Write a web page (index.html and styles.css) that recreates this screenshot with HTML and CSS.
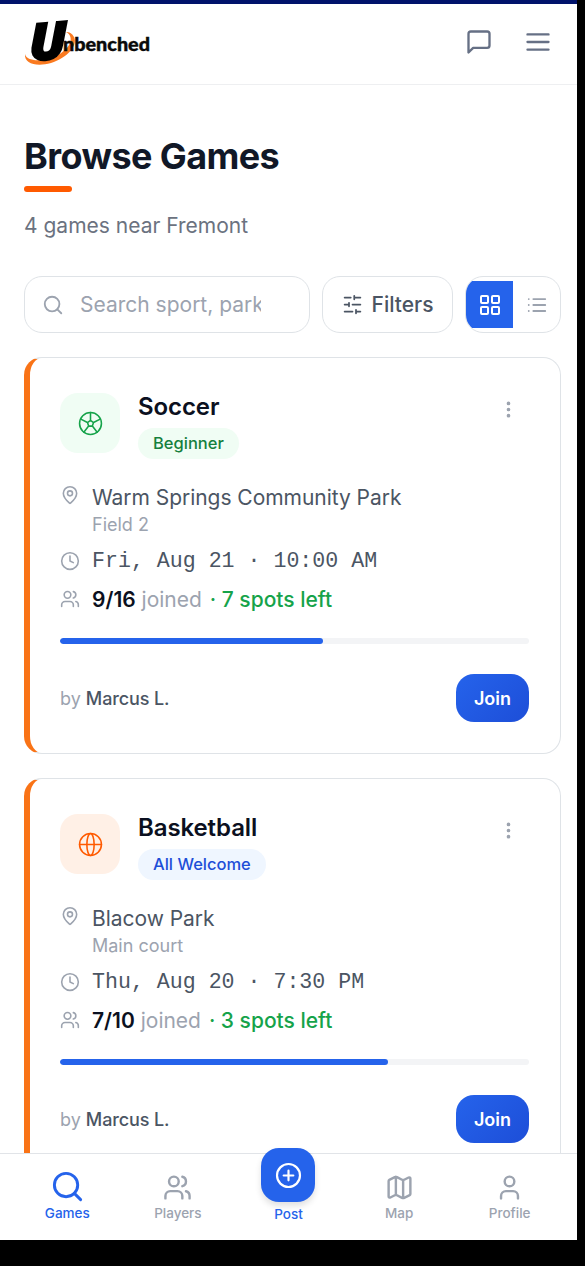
FILE: index.html
```html
<!DOCTYPE html>
<html lang="en">
<head>
<meta charset="utf-8">
<title>Unbenched – Browse Games</title>
<link rel="stylesheet" href="styles.css">
</head>
<body>
<svg class="defs" width="0" height="0" aria-hidden="true">
  <symbol id="pin" viewBox="0 0 24 24"><path d="M20 10c0 5-5.500 10.200-7.400 11.800a1 1 0 0 1-1.200 0C9.500 20.200 4 15 4 10a8 8 0 0 1 16 0"/><circle cx="12" cy="10" r="3"/></symbol>
  <symbol id="clock" viewBox="0 0 24 24"><circle cx="12" cy="12" r="10"/><path d="M12 6v6l4 2"/></symbol>
  <symbol id="users" viewBox="0 0 24 24"><path d="M16 21v-2a4 4 0 0 0-4-4H6a4 4 0 0 0-4 4v2"/><circle cx="9" cy="7" r="4"/><path d="M22 21v-2a4 4 0 0 0-3-3.870M16 3.130a4 4 0 0 1 0 7.750"/></symbol>
  <symbol id="search" viewBox="0 0 24 24"><circle cx="11" cy="11" r="8"/><path d="m21 21-4.300-4.300"/></symbol>
  <symbol id="dots" viewBox="0 0 24 24"><circle cx="12" cy="5" r="1"/><circle cx="12" cy="12" r="1"/><circle cx="12" cy="19" r="1"/></symbol>
</svg>
<div class="screen">
  <header class="header">
    <svg class="logo" viewBox="0 0 130 60" role="img" aria-label="Unbenched">
      <path class="swoosh" d="M1 40C0 50 13 53 27 49C43 44 54 32 50 23C48 19 45 18 42 18C47 20 48 26 45 31C40 39 29 45 18 46C9 47 2 45 1 40Z"/>
      <text class="logo-u" transform="translate(6.500 46.500) rotate(-5) skewX(-6)" textLength="34" lengthAdjust="spacingAndGlyphs">U</text>
      <text class="logo-rest" x="39" y="37" textLength="87" lengthAdjust="spacingAndGlyphs">nbenched</text>
    </svg>
    <div class="header-actions">
      <svg class="icon i28" viewBox="0 0 24 24"><path d="M21 15a2 2 0 0 1-2 2H7l-4 4V5a2 2 0 0 1 2-2h14a2 2 0 0 1 2 2z"/></svg>
      <svg class="icon i28" viewBox="0 0 24 24"><path d="M3 5.500h18M3 12h18M3 18.500h18"/></svg>
    </div>
  </header>
  <main class="main">
    <h1 class="title">Browse Games</h1>
    <div class="underline"></div>
    <p class="subtitle">4 games near Fremont</p>
    <div class="tools">
      <div class="search"><svg class="icon i22"><use href="#search"/></svg><span class="placeholder">Search sport, park</span></div>
      <button class="filters"><svg class="icon i21" viewBox="0 0 24 24"><path d="M21 4h-7M10 4H3M21 12h-9M8 12H3M21 20h-5M12 20H3M14 2v4M8 10v4M16 18v4"/></svg><span>Filters</span></button>
      <div class="toggle">
        <span class="toggle-on"><svg class="icon i24" viewBox="0 0 24 24"><rect x="3" y="3" width="7" height="7" rx="1"/><rect x="14" y="3" width="7" height="7" rx="1"/><rect x="14" y="14" width="7" height="7" rx="1"/><rect x="3" y="14" width="7" height="7" rx="1"/></svg></span>
        <span class="toggle-off"><svg class="icon i22" viewBox="0 0 24 24"><path d="M8 5.500h13M8 12h13M8 18.500h13M3 5.500h.01M3 12h.01M3 18.500h.01"/></svg></span>
      </div>
    </div>
    <article class="card">
      <div class="card-head">
        <div class="sport soccer"><svg class="icon" viewBox="0 0 24 24"><circle cx="12" cy="12" r="10.500"/><path d="m12 9 2.900 2.100-1.100 3.400h-3.600l-1.100-3.400zM12 1.500V9M14.900 11.100l6.400-3.300M13.800 14.500l4.600 5.800M10.200 14.500l-4.600 5.800M9.100 11.100 2.700 7.800"/></svg></div>
        <div class="heading"><h2>Soccer</h2><span class="badge green">Beginner</span></div>
        <svg class="icon dots"><use href="#dots"/></svg>
      </div>
      <div class="row place"><svg class="icon i20"><use href="#pin"/></svg><div><p class="venue">Warm Springs Community Park</p><p class="field">Field 2</p></div></div>
      <div class="row date"><svg class="icon i20"><use href="#clock"/></svg><span>Fri, Aug 21 · 10:00 AM</span></div>
      <div class="row joined"><svg class="icon i20"><use href="#users"/></svg><span><b>9/16</b> joined <em>· 7 spots left</em></span></div>
      <div class="progress"><div class="bar" style="width:56%"></div></div>
      <div class="card-foot"><span class="host">by <strong>Marcus L.</strong></span><button class="join">Join</button></div>
    </article>
    <article class="card">
      <div class="card-head">
        <div class="sport basketball"><svg class="icon" viewBox="0 0 24 24"><circle cx="12" cy="12" r="10.500"/><path d="M1.500 12h21"/><ellipse cx="12" cy="12" rx="3.500" ry="10.500"/></svg></div>
        <div class="heading"><h2>Basketball</h2><span class="badge blue">All Welcome</span></div>
        <svg class="icon dots"><use href="#dots"/></svg>
      </div>
      <div class="row place"><svg class="icon i20"><use href="#pin"/></svg><div><p class="venue">Blacow Park</p><p class="field">Main court</p></div></div>
      <div class="row date"><svg class="icon i20"><use href="#clock"/></svg><span>Thu, Aug 20 · 7:30 PM</span></div>
      <div class="row joined"><svg class="icon i20"><use href="#users"/></svg><span><b>7/10</b> joined <em>· 3 spots left</em></span></div>
      <div class="progress"><div class="bar" style="width:70%"></div></div>
      <div class="card-foot"><span class="host">by <strong>Marcus L.</strong></span><button class="join">Join</button></div>
    </article>
  </main>
  <nav class="nav">
    <a class="tab active"><svg class="icon i35"><use href="#search"/></svg><span>Games</span></a>
    <a class="tab"><svg class="icon i29"><use href="#users"/></svg><span>Players</span></a>
    <a class="tab active post"><span class="post-button"><svg class="icon i29" viewBox="0 0 24 24"><circle cx="12" cy="12" r="9.500"/><path d="M8 12h8M12 8v8"/></svg></span><span>Post</span></a>
    <a class="tab"><svg class="icon i29" viewBox="0 0 24 24"><path d="M14.100 5.550a2 2 0 0 0 1.800 0l3.660-1.830A1 1 0 0 1 21 4.620v12.760a1 1 0 0 1-.550.900l-4.550 2.270a2 2 0 0 1-1.800 0l-4.200-2.100a2 2 0 0 0-1.800 0l-3.660 1.830A1 1 0 0 1 3 19.380V6.620a1 1 0 0 1 .550-.900L8.100 3.450a2 2 0 0 1 1.800 0zM15 5.760v15M9 3.240v15"/></svg><span>Map</span></a>
    <a class="tab"><svg class="icon i29" viewBox="0 0 24 24"><path d="M19 21v-2a4 4 0 0 0-4-4H9a4 4 0 0 0-4 4v2"/><circle cx="12" cy="7" r="4"/></svg><span>Profile</span></a>
  </nav>
</div>
</body>
</html>
```
FILE: styles.css
```css
* { box-sizing: border-box; }
body { margin: 0; height: 1266px; overflow: hidden; background: #000; font-family: Inter, "Liberation Sans", sans-serif; color: #4b5563; }
h1, h2, p { margin: 0; }
button { font: inherit; }
.defs { display: none; }
.screen { width: 577px; height: 1240px; background: #fff; border-top: 4px solid #00126b; display: flex; flex-direction: column; }

.icon { display: block; flex: none; width: 24px; height: 24px; fill: none; stroke: currentColor; stroke-width: 2; stroke-linecap: round; stroke-linejoin: round; }
.i20 { width: 20px; height: 20px; stroke-width: 1.900; }
.i21 { width: 21px; height: 21px; }
.i22 { width: 22px; height: 22px; }
.i28 { width: 28px; height: 28px; }
.i29 { width: 29px; height: 29px; }
.i35 { width: 35px; height: 35px; }

.header { flex: none; height: 81px; border-bottom: 1px solid #eeeff1; display: flex; align-items: center; justify-content: space-between; padding: 0 24px; }
.logo { width: 130px; height: 60px; display: block; }
.swoosh { fill: #fa7a20; }
.logo-u { font: italic 900 50px Roboto, sans-serif; fill: #000; stroke: #000; stroke-width: 3; }
.logo-rest { font: 900 18.500px Lato, sans-serif; fill: #0a0a0a; stroke: #0a0a0a; stroke-width: .4; }
.header-actions { display: flex; align-items: center; gap: 31px; margin: -4px 1px 0 0; color: #667085; }

.main { flex: 1; min-height: 0; overflow: hidden; padding: 49px 16px 0 24px; }
.title { font-size: 36px; line-height: 45px; font-weight: 700; letter-spacing: -0.600px; color: #111827; }
.underline { width: 48px; height: 6px; border-radius: 3px; margin-top: 7px; background: #ff5a00; }
.subtitle { margin-top: 19px; font-size: 21px; line-height: 30px; color: #6b7280; }
.tools { display: flex; gap: 12px; margin-top: 35px; height: 57px; }
.search { width: 286px; border: 1px solid #dfe3e7; border-radius: 18px; display: flex; align-items: center; gap: 16px; padding-left: 17px; color: #9ca3af; }
.placeholder { width: 181px; overflow: hidden; white-space: nowrap; font-size: 21px; line-height: 30px; }
.filters { width: 131px; border: 1px solid #dfe3e7; border-radius: 18px; background: #fff; padding: 0; display: flex; align-items: center; justify-content: center; gap: 9px; font-size: 21px; font-weight: 500; color: #4b5563; }
.toggle { width: 96px; border: 1px solid #dfe3e7; border-radius: 18px; overflow: hidden; display: flex; align-items: center; }
.toggle-on, .toggle-off { width: 47px; height: 47px; display: flex; align-items: center; justify-content: center; }
.toggle-on { background: #2563eb; color: #fff; }
.toggle-on .icon { width: 24px; height: 24px; }
.toggle-off { color: #9ca3af; }

.card { height: 397px; margin-top: 24px; border: 1px solid #dfe3e7; border-left: 6px solid #f97316; border-radius: 18px; padding: 35px 31px 0 30px; }
.card-head { display: flex; }
.sport { width: 60px; height: 60px; border-radius: 18px; display: flex; align-items: center; justify-content: center; }
.sport .icon { stroke-width: 1.500; width: 25px; height: 25px; }
.soccer { background: #f0fdf4; color: #16a34a; }
.basketball { background: #fff0e6; color: #ff5a00; }
.heading { flex: 1; margin-left: 18px; }
h2 { font-size: 24px; line-height: 28px; font-weight: 600; letter-spacing: -.1px; color: #0b1020; }
.badge { display: inline-block; height: 31px; line-height: 31px; border-radius: 16px; padding: 0 15px; margin-top: 7px; font-size: 16.500px; font-weight: 500; vertical-align: top; }
.green { background: #f0fdf4; color: #15803d; }
.blue { background: #eff6ff; color: #1d4ed8; }
.card .dots { margin: 6px 10px 0 0; color: #9ca3af; width: 21px; height: 21px; stroke-width: 2.200; }
.row { display: flex; gap: 12px; }
.row .icon { color: #9ca3af; }
.place { margin-top: 24px; }
.place .icon { margin-top: 2px; }
.venue { font-size: 21px; line-height: 30px; letter-spacing: -.04px; }
.field { font-size: 18px; line-height: 24px; color: #9ca3af; }
.date { margin-top: 9px; height: 30px; align-items: center; font: 21.600px/30px "Liberation Mono", monospace; white-space: pre; }
.joined { margin-top: 8px; height: 30px; align-items: center; font-size: 21px; color: #9ca3af; }
.joined b { font-weight: 600; color: #0b1020; }
.joined em { font-style: normal; font-weight: 500; color: #16a34a; margin-left: 2px; }
.progress { height: 6px; margin-top: 24px; border-radius: 3px; background: #f3f4f6; overflow: hidden; }
.bar { height: 6px; border-radius: 3px; background: #2563eb; }
.card-foot { display: flex; align-items: center; justify-content: space-between; margin-top: 30px; }
.host { font-size: 18px; color: #9ca3af; }
.host strong { font-weight: 500; letter-spacing: -.12px; color: #4b5563; }
.join { width: 73px; height: 48px; border: 0; padding: 0; border-radius: 18px; background: linear-gradient(135deg, #2563eb, #1d4ed8); color: #fff; font-size: 18px; font-weight: 600; }

.nav { flex: none; height: 87px; border-top: 1px solid #e1e4e8; background: #fff; display: flex; padding: 0 12px; }
.tab { flex: 1; display: flex; flex-direction: column; align-items: center; justify-content: flex-end; padding-bottom: 18px; gap: 3px; font-size: 13.500px; line-height: 18px; font-weight: 500; color: #9ca3af; }
.tab > .i29 { margin-bottom: -1px; }
.tab > .i35 { margin-bottom: -3px; }
.post { padding-bottom: 17px; }
.active { color: #2563eb; }
.post-button { flex: none; width: 54px; height: 54px; border-radius: 18px; background: #2563eb; color: #fff; display: flex; align-items: center; justify-content: center; box-shadow: 0 4px 6px rgba(0, 0, 0, .12); }
.post-button .icon { stroke-width: 1.800; }
```
